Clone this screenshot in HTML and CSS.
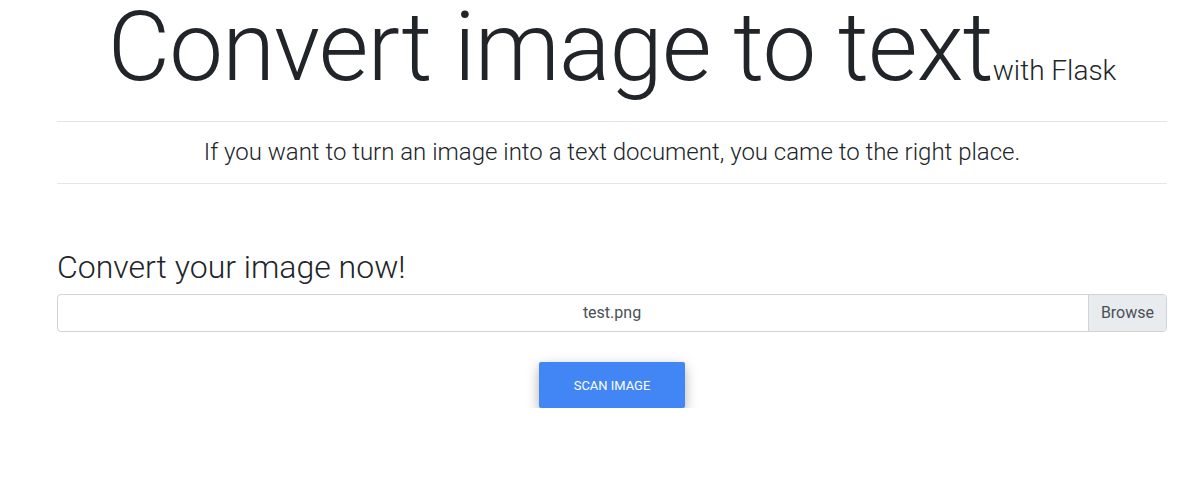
FILE: index.html
```html
<!DOCTYPE html>
<html lang="en">
<head>
<meta charset="utf-8">
<title>Convert image to text</title>
<link rel="stylesheet" href="styles.css">
</head>
<body>
<div class="container">
  <h1 class="title">Convert image to text<small class="title-small">with Flask</small></h1>
  <hr class="rule">
  <h4 class="lead">If you want to turn an image into a text document, you came to the right place.</h4>
  <hr class="rule">
  <section class="upload">
    <h2 class="upload-title">Convert your image now!</h2>
    <div class="file-input">
      <span class="file-name">test.png</span>
      <span class="file-browse">Browse</span>
    </div>
    <div class="actions">
      <button class="btn-scan" type="button">Scan image</button>
    </div>
  </section>
</div>
</body>
</html>
```

FILE: styles.css
```css
* { box-sizing: border-box; }
html, body {
  margin: 0;
  background: #fff;
  font-family: Roboto, "Noto Sans", sans-serif;
  color: #212529;
}
.container {
  width: 1110px;
  margin-left: 57px;
}
.title {
  margin: 0 0 16px;
  height: 105px;
  font-size: 96px;
  font-weight: 300;
  line-height: 94px;
  letter-spacing: -0.85px;
  text-align: center;
  white-space: nowrap;
}
.title-small {
  font-size: 28px;
  font-weight: 300;
  letter-spacing: 0;
}
.rule {
  margin: 16px 0;
  border: 0;
  border-top: 1px solid rgba(0,0,0,.1);
}
.lead {
  margin: 0;
  font-size: 24px;
  font-weight: 300;
  line-height: 1.2;
  text-align: center;
}
.upload {
  margin-top: 64px;
}
.upload-title {
  margin: 0 0 8px;
  font-size: 32px;
  font-weight: 300;
  line-height: 1.2;
}
.file-input {
  position: relative;
  display: flex;
  height: 38px;
  border: 1px solid #ced4da;
  border-radius: 4px;
  overflow: hidden;
  color: #495057;
  font-size: 16px;
  line-height: 1.5;
}
.file-name {
  flex: 1;
  display: flex;
  align-items: center;
  justify-content: center;
}
.file-browse {
  position: absolute;
  top: 0;
  right: 0;
  bottom: 0;
  display: flex;
  align-items: center;
  padding: 0 12px;
  background: #e9ecef;
  border-left: 1px solid #ced4da;
}
.actions {
  display: flex;
  justify-content: center;
  margin-top: 30px;
}
.btn-scan {
  padding: 13.44px 34.24px;
  border: 0;
  border-radius: 2px;
  background: #4285f4;
  color: #fff;
  font-family: Roboto, sans-serif;
  font-size: 12.96px;
  font-weight: 400;
  line-height: 1.5;
  text-transform: uppercase;
  box-shadow: 0 5px 11px 0 rgba(0,0,0,.18), 0 4px 15px 0 rgba(0,0,0,.15);
}
```
